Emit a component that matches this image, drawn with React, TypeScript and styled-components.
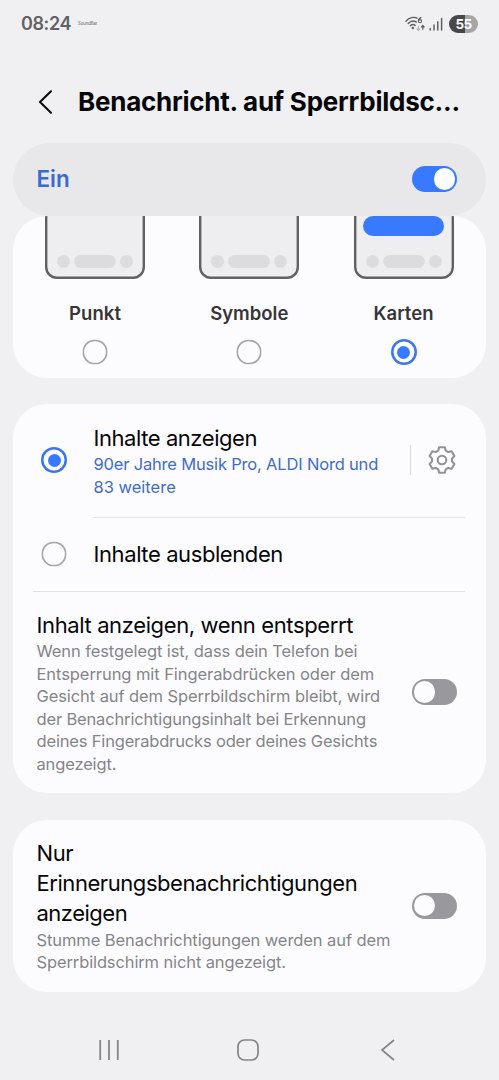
import React from 'react';
import styled, { createGlobalStyle } from 'styled-components';

const Global = createGlobalStyle`
  * { box-sizing: border-box; }
  body { margin: 0; background: #f0f0f2; font-family: Inter, Roboto, sans-serif; color: #060608; }
`;

const Screen = styled.div`
  width: 499px;
  height: 1080px;
  display: flex;
  flex-direction: column;
  background: #f0f0f2;
  overflow: hidden;
`;

const Line = styled.div<{ $ls?: number }>`
  white-space: nowrap;
  letter-spacing: ${p => p.$ls ?? 0}px;
`;

const StatusBar = styled.header`
  height: 46px;
  padding: 1px 21px 0;
  display: flex;
  align-items: center;
`;
const Clock = styled.span`
  font-size: 18px;
  font-weight: 600;
  line-height: 45px;
  letter-spacing: -0.4px;
  color: #626264;
`;
const Device = styled.span`
  margin-left: 7px;
  font-size: 4.2px;
  line-height: 45px;
  color: #555557;
  flex: 1;
`;
const StatusIcons = styled.div`
  display: flex;
  align-items: center;
`;
const Battery = styled.div`
  width: 29px;
  height: 18px;
  margin-left: 6px;
  border-radius: 9px;
  background: linear-gradient(90deg, #48484a 55%, #a5a5a7 55%);
  color: #fff;
  font-size: 13.5px;
  line-height: 18px;
  font-weight: 700;
  letter-spacing: -0.6px;
  text-align: center;
`;

const TitleBar = styled.div`
  height: 97px;
  padding: 14px 38px 0;
  display: flex;
  align-items: center;
  gap: 25px;
`;
const Title = styled.h1`
  margin: 0;
  padding-top: 1px;
  font-size: 26px;
  font-weight: 700;
  line-height: 32px;
`;

const MasterRow = styled.section`
  height: 73px;
  flex: none;
  margin: 0 13px;
  padding: 0 29px 1px 23.5px;
  border-radius: 36.5px;
  background: #e8e8ea;
  display: flex;
  align-items: center;
  justify-content: space-between;
`;
const MasterLabel = styled.div`
  font-size: 22.4px;
  font-weight: 600;
  line-height: 30px;
  color: #3a6bd0;
`;

const Toggle = styled.div<{ $on?: boolean }>`
  flex: none;
  width: 45.5px;
  height: 26px;
  padding: 2px;
  border-radius: 13px;
  display: flex;
  align-items: center;
  justify-content: ${p => (p.$on ? 'flex-end' : 'flex-start')};
  background: ${p => (p.$on ? '#387aff' : '#99999d')};
  &::after {
    content: '';
    width: 21.5px;
    height: 21.5px;
    border-radius: 50%;
    background: #fcfcfe;
  }
`;

const Card = styled.section<{ $h: number; $gap?: number }>`
  flex: none;
  height: ${p => p.$h}px;
  margin: ${p => p.$gap ?? 0}px 13px 0;
  border-radius: 34px;
  background: #fcfcfe;
  overflow: hidden;
`;

const StyleCard = styled(Card)`
  display: flex;
  justify-content: space-between;
  padding: 0 32.5px 0 32px;
`;
const StyleOption = styled.div`
  width: 100px;
  display: flex;
  flex-direction: column;
  align-items: center;
`;
const Phone = styled.div`
  flex: none;
  width: 100px;
  height: 75px;
  margin-top: -12px;
  border-radius: 12px;
  box-shadow: inset 0 0 0 2.4px #616163;
  background: #eeeef0;
  display: flex;
  flex-direction: column;
  align-items: center;
  justify-content: space-between;
  padding: 12px 0 11px;
`;
const Preview = styled.div<{ $on?: boolean }>`
  width: 81px;
  height: 20px;
  border-radius: 10px;
  background: ${p => (p.$on ? '#387aff' : 'transparent')};
`;
const Dock = styled.div`
  display: flex;
  gap: 4px;
`;
const DockItem = styled.div<{ $w: number }>`
  width: ${p => p.$w}px;
  height: 13px;
  border-radius: 6.5px;
  background: #dcdcde;
`;
const StyleName = styled.div`
  margin: 20px 0 12px;
  height: 28px;
  font-size: 18.5px;
  line-height: 28px;
  font-weight: 600;
  color: #363638;
`;

const Radio = styled.div<{ $on?: boolean }>`
  flex: none;
  width: 26px;
  height: 26px;
  border-radius: 50%;
  box-shadow: inset 0 0 0 ${p => (p.$on ? '2.5px #3b76ee' : '1.8px #a6a6a8')};
  transform: scale(${p => (p.$on ? 1 : 0.97)});
  display: flex;
  align-items: center;
  justify-content: center;
  &::after {
    content: '';
    width: 13px;
    height: 13px;
    border-radius: 50%;
    background: ${p => (p.$on ? '#387aff' : 'transparent')};
  }
`;

const Row = styled.div<{ $h: number }>`
  height: ${p => p.$h}px;
  display: flex;
  align-items: center;
  padding: 0 30px 1px 28px;
`;
const SettingRow = styled(Row)`
  padding-left: 23.5px;
  padding-right: 29px;
`;
const RowText = styled.div<{ $indent?: boolean }>`
  flex: 1;
  padding-top: 2px;
  margin-left: ${p => (p.$indent ? 26.5 : 0)}px;
`;
const RowTitle = styled.div`
  font-size: 22px;
  line-height: 29.7px;
`;
const RowNote = styled.div<{ $link?: boolean }>`
  font-size: 16.5px;
  line-height: 22.5px;
  color: ${p => (p.$link ? '#3f6cc9' : '#858587')};
`;
const Divider = styled.div<{ $left: number }>`
  height: 1px;
  margin: 0 21px 0 ${p => p.$left}px;
  background: #e2e2e4;
`;
const GearWrap = styled.div`
  height: 30px;
  border-left: 1px solid #d8d8da;
  padding-left: 17px;
  display: flex;
  align-items: center;
`;

const NavBar = styled.nav`
  flex: 1;
  padding: 27px 0 0;
  display: grid;
  grid-template-columns: 39px 139px 139px 140px 1fr;
  justify-items: center;
  align-items: center;
`;

const WifiIcon = () => (
  <svg width="20" height="18" viewBox="0 0 20 18" fill="none" stroke="#5c5c5e" strokeWidth="1.4" strokeLinecap="round">
    <path d="M1 6.2C4.4 2.4 9 1.9 12 3.2" />
    <path d="M3.2 8.6C5.8 5.8 9 5.7 11.3 7.2" />
    <path d="M5.4 10.8C7 9.3 8.8 9.3 10.2 10.6" />
    <circle cx="7.8" cy="13" r="0.5" fill="#5c5c5e" />
    <path d="M16 2.6C14.3 3 13.5 4.4 13.4 6" strokeWidth="1.1" />
    <circle cx="15" cy="6.2" r="1.6" strokeWidth="1.1" />
    <path d="M17.8 14.2V10.6M16.5 11.9L17.8 10.5L19.1 11.9" strokeWidth="1.3" />
    <path d="M13.4 11.4V15.2M12.1 14L13.4 15.3L14.7 14" stroke="#b5b5b7" strokeWidth="1.2" />
  </svg>
);
const SignalIcon = () => (
  <svg width="18" height="18" viewBox="0 0 18 18" stroke="#606062" strokeWidth="1.5" strokeLinecap="round">
    <path d="M5.2 13.4V15M9 10V15M12.8 6.8V15M16.6 3.5V15" />
  </svg>
);

const tooth = [[-3.8, -9.3], [-2.8, -12.7], [2.8, -12.7], [3.8, -9.3]];
const gearPoints = [0, 1, 2, 3, 4, 5]
  .flatMap(i => {
    const c = Math.cos((i * Math.PI) / 3);
    const s = Math.sin((i * Math.PI) / 3);
    return tooth.map(([x, y]) => `${(14 + x * c - y * s).toFixed(2)},${(14 + x * s + y * c).toFixed(2)}`);
  })
  .join(' ');
const Gear = () => (
  <svg width="28" height="28" viewBox="0 0 28 28" fill="none" stroke="#929294" strokeWidth="2.1" strokeLinejoin="round">
    <polygon points={gearPoints} />
    <circle cx="14" cy="14" r="4.3" />
  </svg>
);

const StyleChoice = ({ name, on, ls }: { name: string; on?: boolean; ls: number }) => (
  <StyleOption>
    <Phone>
      <Preview $on={on} />
      <Dock>
        <DockItem $w={13} />
        <DockItem $w={42} />
        <DockItem $w={13} />
      </Dock>
    </Phone>
    <StyleName><Line $ls={ls}>{name}</Line></StyleName>
    <Radio $on={on} />
  </StyleOption>
);

export default function App() {
  return (
    <Screen>
      <Global />
      <StatusBar>
        <Clock>08:24</Clock>
        <Device>SoundBar</Device>
        <StatusIcons>
          <WifiIcon />
          <SignalIcon />
          <Battery>55</Battery>
        </StatusIcons>
      </StatusBar>
      <TitleBar>
        <svg width="15" height="24" viewBox="0 0 15 24" fill="none" stroke="#080808" strokeWidth="2" strokeLinecap="round" strokeLinejoin="round">
          <path d="M13 1.2L2 12L13 22.8" />
        </svg>
        <Title><Line $ls={-0.25}>Benachricht. auf Sperrbildsc...</Line></Title>
      </TitleBar>
      <MasterRow>
        <MasterLabel>Ein</MasterLabel>
        <Toggle $on />
      </MasterRow>
      <StyleCard $h={162}>
        <StyleChoice name="Punkt" ls={0.1} />
        <StyleChoice name="Symbole" ls={0} />
        <StyleChoice name="Karten" on ls={0} />
      </StyleCard>
      <Card $h={389} $gap={26}>
        <Row $h={113}>
          <Radio $on />
          <RowText $indent>
            <RowTitle><Line $ls={-0.44}>Inhalte anzeigen</Line></RowTitle>
            <RowNote $link>
              <Line $ls={-0.18}>90er Jahre Musik Pro, ALDI Nord und</Line>
              <Line>83 weitere</Line>
            </RowNote>
          </RowText>
          <GearWrap><Gear /></GearWrap>
        </Row>
        <Divider $left={80} />
        <Row $h={73}>
          <Radio />
          <RowText $indent>
            <RowTitle><Line $ls={-0.41}>Inhalte ausblenden</Line></RowTitle>
          </RowText>
        </Row>
        <Divider $left={20} />
        <SettingRow $h={201}>
          <RowText>
            <RowTitle><Line $ls={-0.38}>Inhalt anzeigen, wenn entsperrt</Line></RowTitle>
            <RowNote>
              <Line $ls={-0.1}>Wenn festgelegt ist, dass dein Telefon bei</Line>
              <Line $ls={-0.07}>Entsperrung mit Fingerabdrücken oder dem</Line>
              <Line $ls={-0.09}>Gesicht auf dem Sperrbildschirm bleibt, wird</Line>
              <Line $ls={-0.16}>der Benachrichtigungsinhalt bei Erkennung</Line>
              <Line $ls={-0.17}>deines Fingerabdrucks oder deines Gesichts</Line>
              <Line $ls={-0.15}>angezeigt.</Line>
            </RowNote>
          </RowText>
          <Toggle />
        </SettingRow>
      </Card>
      <Card $h={172} $gap={27}>
        <SettingRow $h={172}>
          <RowText>
            <RowTitle>
              <Line $ls={-0.4}>Nur</Line>
              <Line $ls={-0.44}>Erinnerungsbenachrichtigungen</Line>
              <Line $ls={-0.5}>anzeigen</Line>
            </RowTitle>
            <RowNote>
              <Line $ls={-0.08}>Stumme Benachrichtigungen werden auf dem</Line>
              <Line $ls={-0.12}>Sperrbildschirm nicht angezeigt.</Line>
            </RowNote>
          </RowText>
          <Toggle />
        </SettingRow>
      </Card>
      <NavBar>
        <span />
        <svg width="22" height="22" viewBox="0 0 22 22" stroke="#858587" strokeWidth="1.8">
          <path d="M2.2 1V21M11 1V21M19.8 1V21" />
        </svg>
        <svg width="22" height="22" viewBox="0 0 22 22" fill="none" stroke="#858587" strokeWidth="1.7">
          <rect x="1" y="1" width="20" height="20" rx="6.5" />
        </svg>
        <svg width="15" height="22" viewBox="0 0 15 22" fill="none" stroke="#858587" strokeWidth="1.7">
          <path d="M14 1L2 11L14 21" />
        </svg>
      </NavBar>
    </Screen>
  );
}
